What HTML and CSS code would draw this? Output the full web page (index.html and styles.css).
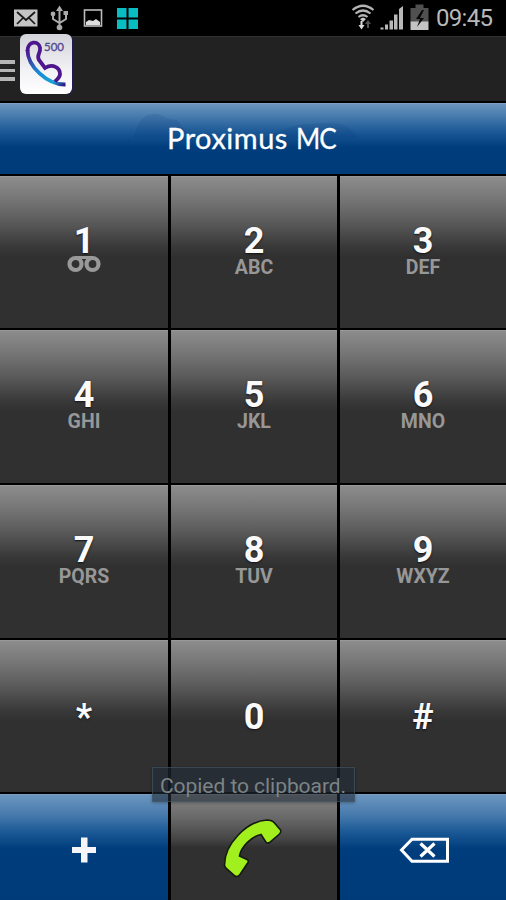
FILE: index.html
```html
<!DOCTYPE html>
<html lang="en">
<head>
<meta charset="utf-8">
<title>Proximus MC</title>
<link rel="stylesheet" href="styles.css">
</head>
<body>
<div class="phone">
  <header class="status">
    <svg class="status-left" width="150" height="36" viewBox="0 0 150 36">
      <rect x="14" y="9.500" width="23.500" height="17" fill="#c4c4c4"/>
      <path d="M17 12l9 8 9-8M17 24l6-6M35 24l-6-6" fill="none" stroke="#181818" stroke-width="1.700"/>
      <g fill="none" stroke="#aaa" stroke-width="2"><path d="M59.500 9v18M53 15v4l6.500 4 6.500-4v-5"/></g>
      <path d="M59.500 5.500l3.500 5.500h-7zM63.500 11h4.500v4h-4.500z" fill="#aaa"/>
      <circle cx="53" cy="14" r="2.400" fill="#aaa"/><circle cx="59.500" cy="27.500" r="2.800" fill="#aaa"/>
      <rect x="84.500" y="10" width="17" height="16" fill="none" stroke="#bcbcbc" stroke-width="1.600"/>
      <path d="M86 25v-3l3-2 4 1 3-2 4 3v3z" fill="#ddd"/>
      <path d="M117 8h9.500v9.500H117zM128.500 8h9.500v9.500h-9.500zM117 19.500h9.500V29H117zM128.500 19.500h9.500V29h-9.500z" fill="#08bec2"/>
    </svg>
    <div class="status-right">
      <svg width="80" height="36" viewBox="350 0 80 36">
        <g fill="none" stroke="#b4b4b4" stroke-width="2.200"><path d="M352.500 10q10.500-8.500 21 0M355.500 13.500q7.500-6 15 0M358.500 17q4.500-3.500 9 0"/></g>
        <path d="M360 19l3-1.500 3 1.500-3 3z" fill="#ccc"/>
        <path d="M360.500 21h2v4h2l-3 4.500-3-4.500h2z" fill="#ddd"/>
        <path d="M367 28h2v-4h2l-3-4-3 4h2z" fill="#555"/>
        <path d="M380.500 29.500v-2h3v2zM385 29.500v-5h3v5zM389.500 29.500v-9h3.500v9zM394 29.500v-15h3.500v15zM399 29.500V9l4-3v23.500z" fill="#b8b8b8"/>
        <path d="M410.500 8h5V4.500h8V8h5v14h-18z" fill="#505050"/><path d="M410.500 21.500h18V30h-18z" fill="#c4c4c4"/>
        <path d="M422 10l-6 9h4l-3 8 7-9h-4l4-8z" fill="#080808"/>
      </svg>
      <span class="clock">09:45</span>
    </div>
  </header>
  <div class="action">
    <div class="menu"><i></i><i></i><i></i></div>
    <svg class="logo" width="56" height="62" viewBox="18 34 56 62">
      <defs>
        <linearGradient id="tile" x1="0" y1="0" x2="0" y2="1"><stop offset="0" stop-color="#d2d2da"/><stop offset=".6" stop-color="#f2f2f5"/><stop offset="1" stop-color="#fff"/></linearGradient>
        <linearGradient id="curve" x1="0" y1="0" x2="1" y2="1"><stop offset="0" stop-color="#50148c"/><stop offset=".45" stop-color="#1688d0"/><stop offset=".8" stop-color="#1aa2d8"/><stop offset="1" stop-color="#30147f"/></linearGradient>
      </defs>
      <rect x="21.500" y="35" width="52" height="59" rx="6" fill="#211b55"/>
      <rect x="20" y="34" width="52" height="60" rx="6" fill="url(#tile)"/>
      <path d="M65.500 84.500C47 85 27.500 66 27.500 50" fill="none" stroke="url(#curve)" stroke-width="3.800"/>
      <path d="M27.500 51c0-10 11-11 12.500-3.500 1 6-4 7-1 12.500l6 8c8-5 15 0 15 6 0 4-3 5-5 7.500" fill="none" stroke="#4d168c" stroke-width="3.800"/>
      <text class="logo-text" x="44" y="50.500" textLength="20" lengthAdjust="spacingAndGlyphs">500</text>
    </svg>
  </div>
  <div class="title"><svg class="title-shade" viewBox="0 0 506 71"><path d="M134 34c2-12 8-25 22-24 8 1 10 6 21 6l14 18zM267 34c16-9 26-13 42-14 22-1 40-4 48 14z" fill="#063b75" opacity=".14"/></svg><span class="name">Proximus <span class="suffix">MC</span></span></div>
  <main class="pad">
    <div class="key"><b>1</b><small><svg class="voicemail" width="36" height="20" viewBox="0 0 36 20"><circle cx="9.500" cy="9" r="6" fill="none" stroke="#999" stroke-width="4.200"/><circle cx="26.500" cy="9" r="6" fill="none" stroke="#999" stroke-width="4.200"/><path d="M9 2.500h18" stroke="#999" stroke-width="3"/></svg></small></div>
    <div class="key"><b>2</b><small>ABC</small></div>
    <div class="key"><b>3</b><small>DEF</small></div>
    <div class="key"><b>4</b><small>GHI</small></div>
    <div class="key"><b>5</b><small>JKL</small></div>
    <div class="key"><b>6</b><small>MNO</small></div>
    <div class="key"><b>7</b><small>PQRS</small></div>
    <div class="key"><b>8</b><small>TUV</small></div>
    <div class="key"><b>9</b><small>WXYZ</small></div>
    <div class="key single"><b>*</b></div>
    <div class="key single"><b>0</b></div>
    <div class="key single"><b>#</b></div>
    <div class="key tool blue"><svg width="30" height="30" viewBox="0 0 30 30"><path d="M12 1.500h6.500v9.500h8.500v6h-8.500V26.500H12V17H3v-6h9z" fill="#f5f5fa"/></svg></div>
    <div class="key tool"><svg class="call" width="64" height="64" viewBox="0 0 64 64"><path d="M3.500 49C3.500 28 26 5 46 4q5 0 7.500 3l6 7q1 2-1 4l-10 8.500q-2.500 1.500-4-1l-4.500-7C31 20 20 31 18.500 40l7.500 3.500q2 1 1 3l-8 12q-2 3-5 1.500l-7-6q-3.500-2.500-3.500-5z" fill="#a2ef1e" stroke="#141a10" stroke-width="1.600"/></svg></div>
    <div class="key tool blue"><svg class="erase" width="52" height="28" viewBox="0 0 52 28"><path d="M13 3.200h35.500v22H13L2.500 14z" fill="none" stroke="#fff" stroke-width="3"/><path d="M21.500 7.500l14 13M35.500 7.500l-14 13" stroke="#fff" stroke-width="3.200"/></svg></div>
  </main>
  <div class="toast">Copied to clipboard.</div>
</div>
</body>
</html>
```
FILE: styles.css
```css
* { box-sizing: border-box; }
body { margin: 0; background: #000; font-family: Roboto, "Liberation Sans", sans-serif; }
svg { display: block; }
.phone { position: relative; width: 506px; height: 900px; overflow: hidden; background: #000; }
.status { height: 36px; display: flex; justify-content: space-between; }
.status-right { display: flex; width: 156px; }
.clock { margin-left: 6px; font-size: 24px; line-height: 37px; color: #b9b9b9; white-space: nowrap; letter-spacing: -.7px; }
.action { height: 65px; background: #222; border-top: 1px solid #303030; display: flex; }
.menu { width: 14.500px; margin: 23px 3.500px 0 0; display: flex; flex-direction: column; gap: 5px; }
.menu i { height: 3.500px; background: #b5b5b5; }
.logo { margin-top: -3px; }
.logo-text { font: 11px Lato, sans-serif; fill: #51458d; stroke: #51458d; stroke-width: .3px; }
.title { position: relative; height: 71px; margin: 2px 0; padding-left: 167px; background: linear-gradient(#6b95bf 0, #4a7dae 16%, #175594 42%, #003d7d 62%, #003b79 100%); border-top: 1px solid #7da0c1; color: #fff; font: 29px/68px Lato, sans-serif; }
.name { position: relative; -webkit-text-stroke: .3px #fff; white-space: nowrap; letter-spacing: .5px; }
.suffix { display: inline-block; letter-spacing: -1px; transform: scaleX(.9); transform-origin: left; }
.title-shade { position: absolute; inset: 0; }
.pad { display: grid; grid-template-columns: 168px 166px 166px; grid-template-rows: 152px 153px 153px 152px 106px; gap: 2px 3px; }
.key { display: flex; flex-direction: column; align-items: center; padding-top: 48px; background: linear-gradient(#8c8c8c 0, #777 14%, #5a5a5a 30%, #393939 46%, #303030 53%, #303030 100%); border-top: 1px solid #999; }
.key b { font-size: 36px; line-height: 32px; color: #fafafa; text-shadow: 0 1px 2px #111; }
.key small { height: 18px; margin-top: 2px; font-size: 19.5px; line-height: 18px; font-weight: 700; color: #979797; }
.voicemail { margin-top: -4px; }
.single { padding-top: 60px; }
.tool { padding: 6px 0 0; justify-content: center; background: linear-gradient(#858585 0, #686868 22%, #454545 42%, #303030 50%, #303030 100%); }
.call { margin: -6px 2px 0 0; }
.erase { margin: -1px 0 0 3px; }
.blue { background: linear-gradient(#6b95bf 0, #497cae 18%, #195894 36%, #003d7d 51%, #003b79 100%); border-top-color: #789dc0; }
.toast { position: absolute; left: 152px; top: 767px; width: 203px; height: 35px; padding-left: 7px; border: 1px solid rgba(75, 95, 108, .55); background: rgba(31, 43, 55, .6); color: #7d8486; font-size: 21px; line-height: 36px; letter-spacing: -.05px; white-space: nowrap; box-shadow: 0 1px 3px rgba(0, 0, 0, .3); }
```
